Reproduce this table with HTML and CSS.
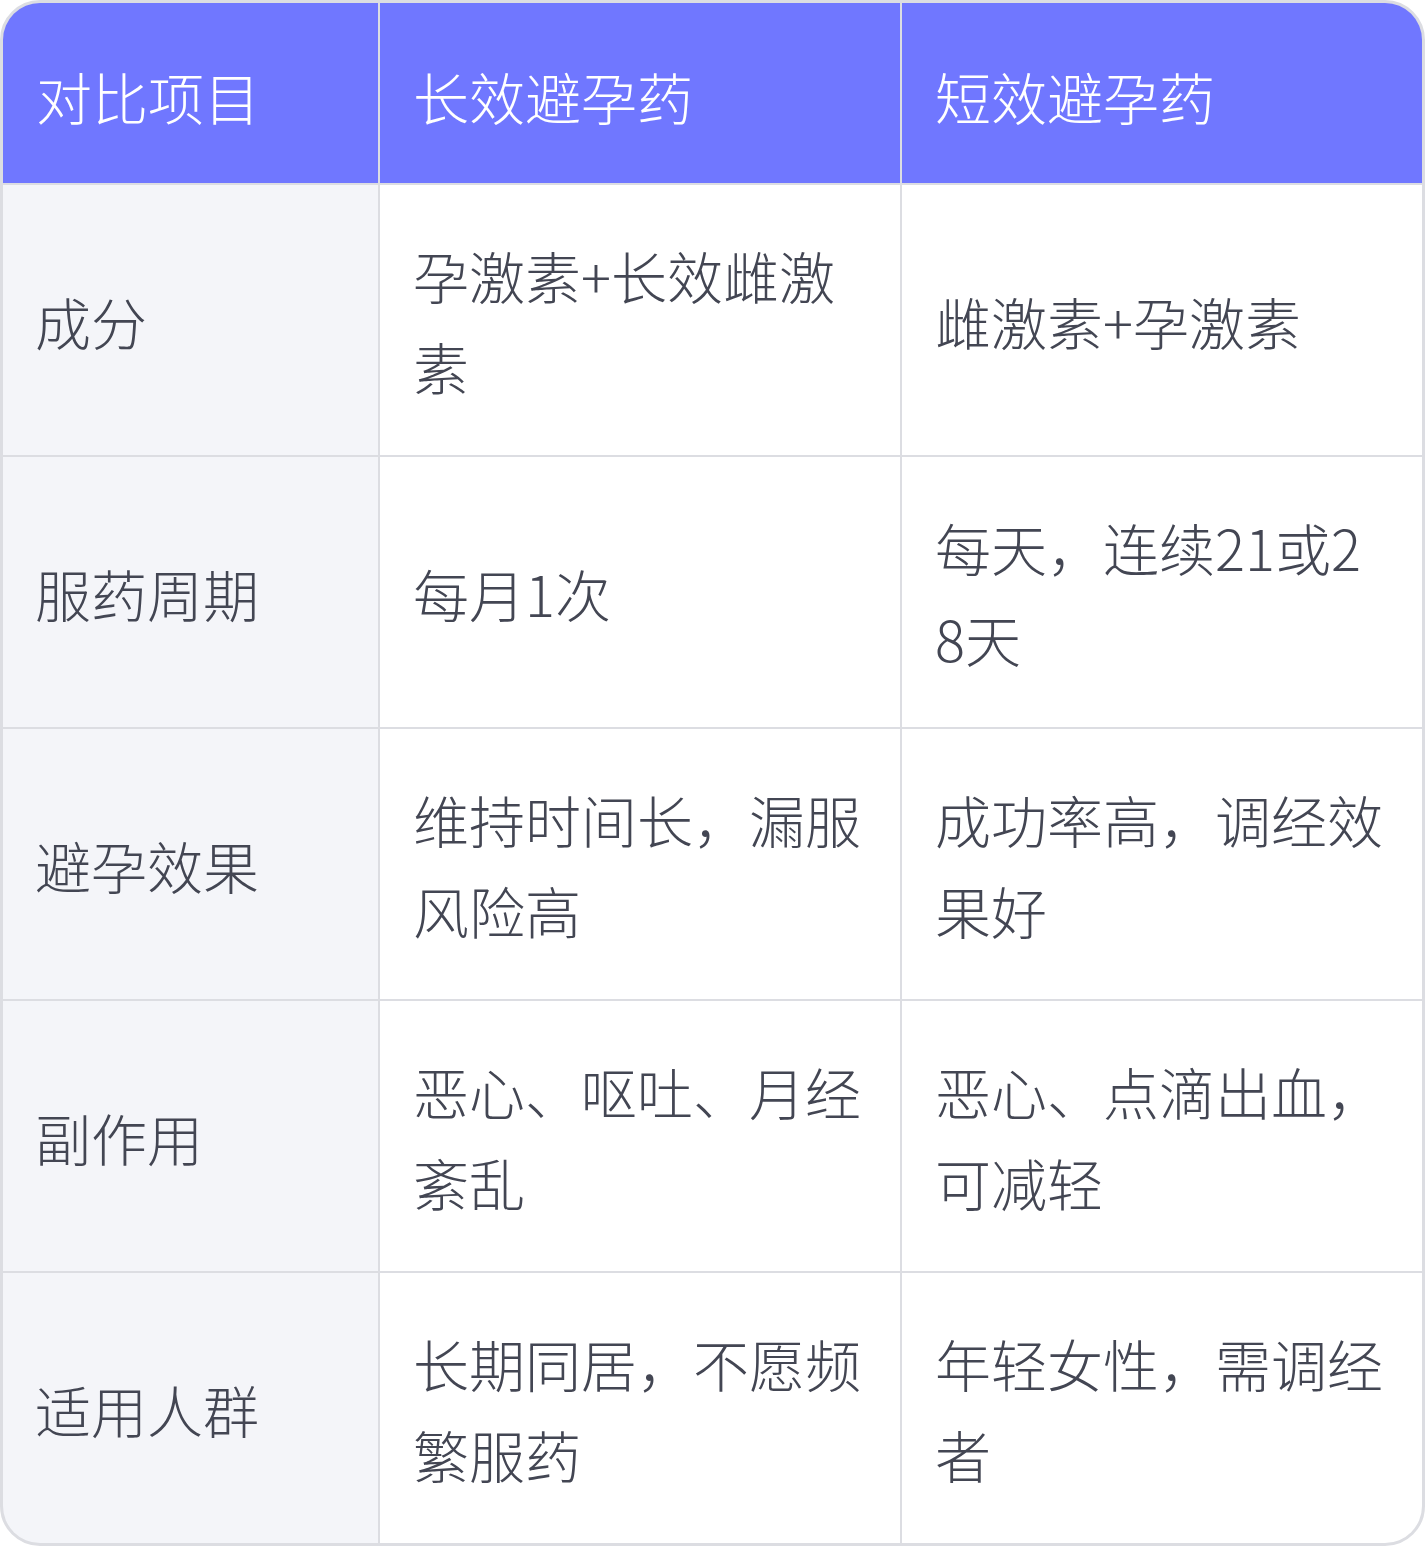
FILE: index.html
```html
<!DOCTYPE html>
<html lang="zh-CN">
<head>
<meta charset="utf-8">
<title>长效避孕药与短效避孕药对比</title>
<link rel="stylesheet" href="styles.css">
</head>
<body>
<div class="compare">
  <div class="cell head"><span class="txt">对比项目</span></div>
  <div class="cell head"><span class="txt">长效避孕药</span></div>
  <div class="cell head"><span class="txt">短效避孕药</span></div>

  <div class="cell label"><span class="txt">成分</span></div>
  <div class="cell"><span class="txt">孕激素+长效雌激素</span></div>
  <div class="cell"><span class="txt">雌激素+孕激素</span></div>

  <div class="cell label"><span class="txt">服药周期</span></div>
  <div class="cell"><span class="txt">每月1次</span></div>
  <div class="cell"><span class="txt">每天，连续21或28天</span></div>

  <div class="cell label"><span class="txt">避孕效果</span></div>
  <div class="cell"><span class="txt">维持时间长，漏服风险高</span></div>
  <div class="cell"><span class="txt">成功率高，调经效果好</span></div>

  <div class="cell label"><span class="txt">副作用</span></div>
  <div class="cell"><span class="txt">恶心、呕吐、月经紊乱</span></div>
  <div class="cell"><span class="txt">恶心、点滴出血，可减轻</span></div>

  <div class="cell label"><span class="txt">适用人群</span></div>
  <div class="cell"><span class="txt">长期同居，不愿频繁服药</span></div>
  <div class="cell"><span class="txt">年轻女性，需调经者</span></div>
</div>
</body>
</html>
```
FILE: styles.css
```css
html, body {
  margin: 0;
  padding: 0;
  background: #ffffff;
}

.compare {
  width: 1425px;
  height: 1546px;
  box-sizing: border-box;
  border: 3px solid #dcdde2;
  border-radius: 40px;
  overflow: hidden;
  display: grid;
  grid-template-columns: 375px 520px 520px;
  grid-template-rows: 180px repeat(5, 270px);
  gap: 2px;
  background: #dcdde2;
  font-family: "Noto Sans CJK SC", "Noto Sans", sans-serif;
  font-weight: 300;
  font-size: 56px;
  line-height: 91px;
  color: #434653;
}

.cell {
  background: #ffffff;
  display: flex;
  align-items: center;
  padding: 0 34px 0 33px;
  word-break: break-all;
}

.txt {
  display: block;
}

.cell.head {
  background: #7077ff;
  color: #ffffff;
  padding-top: 4px;
}

.cell.label {
  background: #f4f5f9;
  padding-left: 32px;
}
```
